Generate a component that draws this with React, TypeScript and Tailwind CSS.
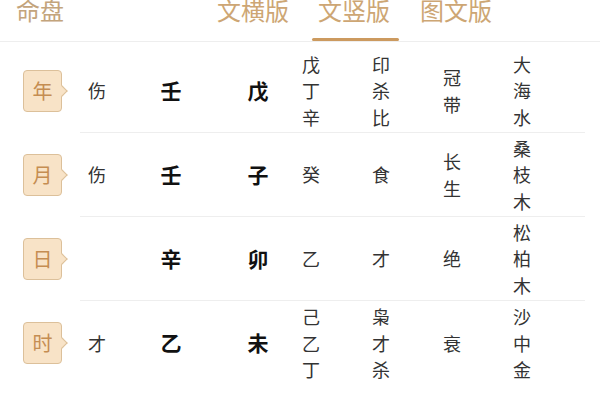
import React from "react";

const rows = [
  { label: "年", god: "伤", stem: "壬", branch: "戊", hidden: ["戊", "丁", "辛"], gods: ["印", "杀", "比"], phase: ["冠", "带"], nayin: ["大", "海", "水"] },
  { label: "月", god: "伤", stem: "壬", branch: "子", hidden: ["癸"], gods: ["食"], phase: ["长", "生"], nayin: ["桑", "枝", "木"] },
  { label: "日", god: "", stem: "辛", branch: "卯", hidden: ["乙"], gods: ["才"], phase: ["绝"], nayin: ["松", "柏", "木"] },
  { label: "时", god: "才", stem: "乙", branch: "未", hidden: ["己", "乙", "丁"], gods: ["枭", "才", "杀"], phase: ["衰"], nayin: ["沙", "中", "金"] },
];

function Stack({ chars }: { chars: string[] }) {
  return (
    <div className="flex flex-col items-center text-[18px] leading-[26.5px] text-[#333]">
      {chars.map((c, i) => (
        <span key={i}>{c}</span>
      ))}
    </div>
  );
}

function Badge({ label }: { label: string }) {
  return (
    <div className="relative w-[39px] h-[42px] rounded-[4px] border border-[#dcc09a] bg-[#f8e3c7] flex items-center justify-center">
      <span className="text-[20px] leading-none text-[#c58d52]">{label}</span>
      <span className="absolute right-[-5px] top-1/2 -translate-y-1/2 w-[8px] h-[8px] rotate-45 border-t border-r border-[#dcc09a] bg-[#f8e3c7]"></span>
    </div>
  );
}

export default function App() {
  return (
    <div
      className="w-[600px] h-[400px] overflow-hidden bg-white"
      style={{ fontFamily: '"Noto Sans CJK SC", "Noto Sans", sans-serif' }}
    >
      <div className="relative h-[42px] border-b border-[#eeeeee] flex">
        <div className="pl-[16px] -mt-[5px] text-[24px] leading-[30px] text-[#c3a47c]">命盘</div>
        <div className="ml-auto mr-[107px] flex gap-[28px] -mt-[5px] text-[24px] leading-[30px] text-[#cda674]">
          <span className="w-[73px]">文横版</span>
          <span className="w-[74px]">文竖版</span>
          <span className="w-[73px]">图文版</span>
        </div>
        <div className="absolute left-[312px] bottom-[0px] w-[87px] h-[3px] rounded-full bg-[#cc9a5f]"></div>
      </div>
      <div className="pt-[7px]">
        {rows.map((r, i) => (
          <div key={i} className="flex h-[84px]">
            <div className="w-[80px] pl-[23px] flex items-center">
              <Badge label={r.label} />
            </div>
            <div
              className={
                i < rows.length - 1
                  ? "w-[505px] border-b border-[#eeeeee] grid grid-cols-[34px_114px_60px_46px_94px_48px_92px] items-center"
                  : "w-[505px] grid grid-cols-[34px_114px_60px_46px_94px_48px_92px] items-center"
              }
            >
              <div className="flex justify-center text-[18px] text-[#333]">{r.god}</div>
              <div className="flex justify-center text-[21px] font-bold text-[#111]">{r.stem}</div>
              <div className="flex justify-center text-[21px] font-bold text-[#111]">{r.branch}</div>
              <Stack chars={r.hidden} />
              <Stack chars={r.gods} />
              <Stack chars={r.phase} />
              <Stack chars={r.nayin} />
            </div>
          </div>
        ))}
      </div>
    </div>
  );
}
